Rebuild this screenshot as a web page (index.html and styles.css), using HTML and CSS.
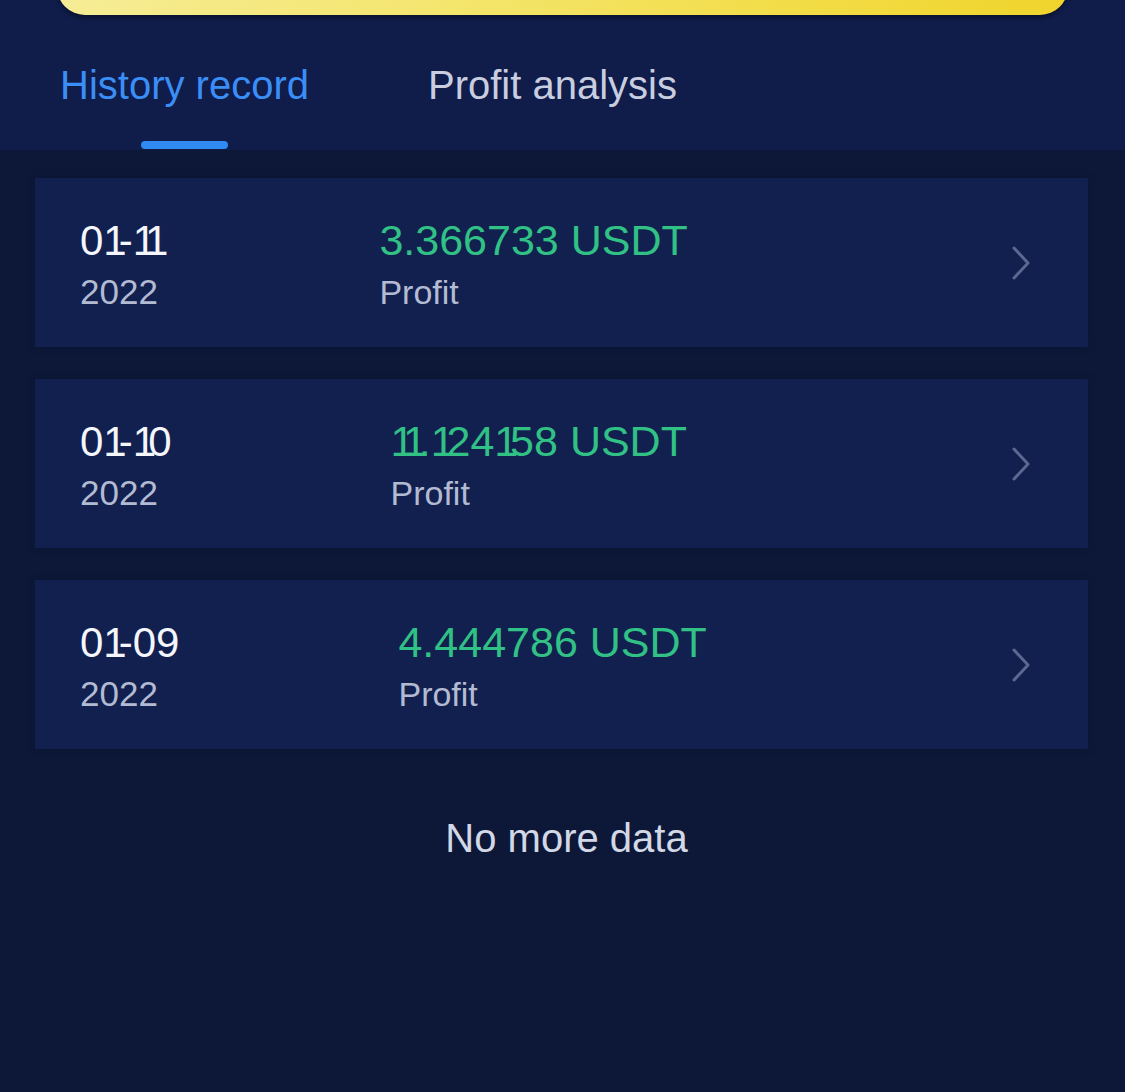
FILE: index.html
```html
<!DOCTYPE html>
<html>
<head lang="en">
    <meta charset="UTF-8">
    <title>History record</title>
    <link rel="stylesheet" href="styles.css">
</head>
<body>
<div id="header">
    <div class="banner"></div>
    <ul class="tabs">
        <li class="tab selected">History record<span class="bar"></span></li>
        <li class="tab">Profit analysis</li>
    </ul>
</div>
<div id="list">
    <div class="item">
        <div class="date">
            <p class="day">0<span class="one">1</span>-<span class="one">11</span></p>
            <p class="year">2022</p>
        </div>
        <div class="info">
            <p class="amount">3.366733 USDT</p>
            <p class="label">Profit</p>
        </div>
        <svg class="arrow" width="20" height="36" viewBox="0 0 20 36">
            <path d="M3 3 L17 18 L3 33" fill="none" stroke="#5c688f" stroke-width="3" stroke-linecap="round" stroke-linejoin="round"/>
        </svg>
    </div>
    <div class="item">
        <div class="date">
            <p class="day">0<span class="one">1</span>-<span class="one">1</span>0</p>
            <p class="year">2022</p>
        </div>
        <div class="info">
            <p class="amount"><span class="one">11</span>.<span class="one">1</span>24<span class="one">1</span>58 USDT</p>
            <p class="label">Profit</p>
        </div>
        <svg class="arrow" width="20" height="36" viewBox="0 0 20 36">
            <path d="M3 3 L17 18 L3 33" fill="none" stroke="#5c688f" stroke-width="3" stroke-linecap="round" stroke-linejoin="round"/>
        </svg>
    </div>
    <div class="item">
        <div class="date">
            <p class="day">0<span class="one">1</span>-09</p>
            <p class="year">2022</p>
        </div>
        <div class="info">
            <p class="amount">4.444786 USDT</p>
            <p class="label">Profit</p>
        </div>
        <svg class="arrow" width="20" height="36" viewBox="0 0 20 36">
            <path d="M3 3 L17 18 L3 33" fill="none" stroke="#5c688f" stroke-width="3" stroke-linecap="round" stroke-linejoin="round"/>
        </svg>
    </div>
    <p class="end">No more data</p>
</div>
</body>
</html>
```

FILE: styles.css
```css
* {
    padding: 0;
    margin: 0;
}

ul, ol {
    list-style: none;
}

body {
    background: #0d1838;
    font-family: "Liberation Sans", Arial, sans-serif;
    min-height: 1092px;
}

#header {
    background: #101c4a;
    padding-bottom: 1px;
}

.banner {
    height: 40px;
    margin: -25px 57px 0 57px;
    border-radius: 0 0 28px 28px;
    background: linear-gradient(90deg, #f6ec96 0%, #f4e56c 40%, #f2dc45 75%, #f0d42c 100%);
    box-shadow: 0 3px 4px rgba(0, 0, 0, 0.35);
}

.tabs {
    display: flex;
    gap: 119px;
    padding-left: 60px;
    margin-top: 47px;
}

.tab {
    display: flex;
    flex-direction: column;
    align-items: center;
    font-size: 40px;
    line-height: 46px;
    color: #c8cee0;
    white-space: nowrap;
}

.tab.selected {
    color: #3b8ef5;
}

.tab .bar {
    display: block;
    width: 87px;
    height: 8px;
    margin-top: 33px;
    border-radius: 4px;
    background: #2f8bf2;
}

#list {
    padding: 28px 37px 0 35px;
}

.item {
    display: flex;
    align-items: flex-start;
    height: 169px;
    box-sizing: border-box;
    padding: 38px 57px 0 45px;
    margin-bottom: 32px;
    background: #122050;
    box-shadow: 0 0 6px rgba(10, 18, 45, 0.6);
}

.item:last-of-type {
    margin-bottom: 0;
}

/* the app font draws "1" narrower than the other digits */
.one {
    letter-spacing: -0.19em;
}

.day, .amount {
    font-size: 42px;
    line-height: 49px;
    color: #f4f6fb;
    white-space: nowrap;
}

.amount {
    font-size: 43px;
    color: #31c185;
}

.year, .label {
    font-size: 35px;
    line-height: 54px;
    color: #b3bbd3;
}

.label {
    font-size: 34px;
}

.info {
    margin-left: 219px;
    flex: 1;
}

.arrow {
    align-self: center;
    margin-top: -38px;
}

.end {
    margin-top: 66px;
    padding-left: 10px;
    text-align: center;
    font-size: 40px;
    line-height: 46px;
    color: #d3d8e6;
}
```
